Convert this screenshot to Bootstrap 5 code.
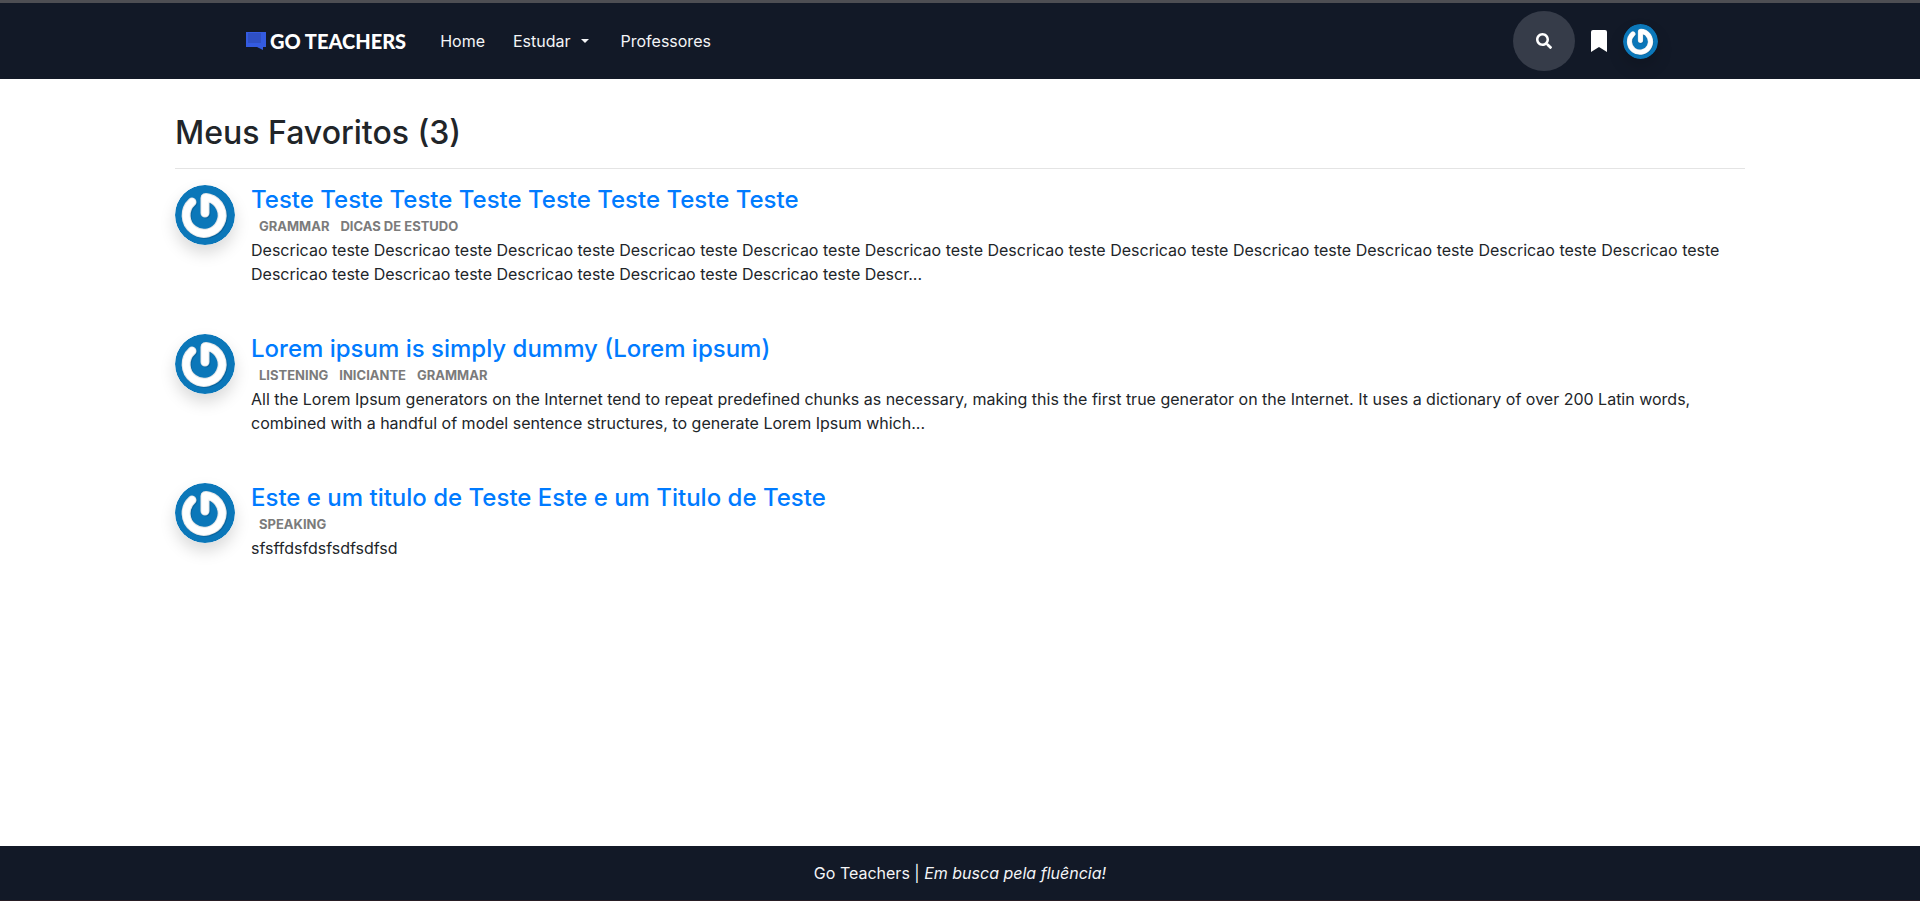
<!DOCTYPE html>
<html lang="pt-BR">
<head>
<meta charset="utf-8">
<meta name="viewport" content="width=device-width, initial-scale=1">
<title>Go Teachers - Meus Favoritos</title>
<link href="https://cdn.jsdelivr.net/npm/bootstrap@5.3.0/dist/css/bootstrap.min.css" rel="stylesheet">
<style>
  :root { --navy: #121927; --link: #007bff; }
  body { font-family: Inter, "Liberation Sans", sans-serif; color: #212529; }
  .site-bar { background: var(--navy); border-top: 3px solid #4d4e53; padding: 8px 0; }
  .bar-inner { padding: 0 102px 0 86px; }
  .site-bar .navbar-brand { font: 900 20px/24px Lato, sans-serif; color: #fff; padding: 0; margin-right: 20px; }
  .site-bar .navbar-nav .nav-link { color: #f4f5f7; padding: 8px 14px; }
  .dropdown-toggle::after { margin-left: 10px; }
  .search-btn { width: 62px; height: 60px; border-radius: 50%; background: #363c49; }
  .avatar { border-radius: 50%; box-shadow: 0 8px 16px rgba(0, 0, 0, .15); flex: none; }
  .page-col { padding: 0 15px; }
  h1 { font-size: 32px; line-height: 38px; padding-top: 35px; }
  .rule { border-top: 1px solid #e4e4e4; opacity: 1; }
  .fav { min-height: 149px; }
  .fav h2 { font-size: 24px; line-height: 29px; }
  .fav h2 a { color: var(--link); }
  .tags { font-size: 13px; line-height: 24px; color: #7b7b7b; padding-left: 8px; gap: 11px; }
  .site-foot { background: var(--navy); color: #f4f5f7; padding: 15px 0; border-bottom: 1px solid #261d24; }
</style>
</head>
<body class="d-flex flex-column min-vh-100 bg-white">
<svg width="0" height="0" class="position-absolute" aria-hidden="true">
  <symbol id="power" viewBox="0 0 60 60">
    <circle cx="30" cy="30" r="30" fill="#0b77b9"/>
    <path d="M17 17A18 18 0 1 0 34 13Q30 12 30 13V28" transform="translate(1 1)" fill="none" stroke="#075a90" stroke-opacity=".6" stroke-width="9" stroke-linecap="round" stroke-linejoin="round"/>
    <path d="M17 17A18 18 0 1 0 34 13Q30 12 30 13V28" fill="none" stroke="#e3e6e8" stroke-width="9" stroke-linecap="round" stroke-linejoin="round"/>
    <path d="M17 17A18 18 0 1 0 34 13Q30 12 30 13V28" fill="none" stroke="#fff" stroke-width="7" stroke-linecap="round" stroke-linejoin="round"/>
  </symbol>
</svg>

<header class="site-bar">
  <div class="row g-0 justify-content-center">
    <nav class="col-10 bar-inner navbar navbar-expand" aria-label="Principal">
      <a class="navbar-brand d-flex align-items-center" href="#">
        <svg width="20" height="18" viewBox="0 0 20 18" class="me-1" aria-hidden="true"><path d="M0 0H20V15H17V18L11 15H0Z" fill="#345be0"/><path d="M2 1H15V11H2Z" fill="#2f50c4"/></svg>
        GO TEACHERS
      </a>
      <ul class="navbar-nav me-auto">
        <li class="nav-item"><a class="nav-link" href="#">Home</a></li>
        <li class="nav-item dropdown me-1"><a class="nav-link dropdown-toggle" href="#" role="button" data-bs-toggle="dropdown" aria-expanded="false">Estudar</a></li>
        <li class="nav-item"><a class="nav-link" href="#">Professores</a></li>
      </ul>
      <button type="button" class="btn search-btn border-0 p-0 d-flex align-items-center justify-content-center" aria-label="Buscar">
        <svg width="16" height="16" viewBox="0 0 512 512" fill="#fff"><path d="M505 442.700 405.300 343c-4.500-4.500-10.600-7-17-7H372c27.600-35.300 44-79.700 44-128C416 93.100 322.900 0 208 0S0 93.100 0 208s93.100 208 208 208c48.300 0 92.700-16.400 128-44v16.300c0 6.400 2.500 12.500 7 17l99.700 99.700c9.400 9.400 24.600 9.400 33.900 0l28.300-28.300c9.400-9.400 9.400-24.600.1-34zM208 336c-70.700 0-128-57.200-128-128 0-70.700 57.200-128 128-128 70.700 0 128 57.200 128 128 0 70.700-57.200 128-128 128z"/></svg>
      </button>
      <a href="#" class="d-flex mx-3" aria-label="Favoritos"><svg width="16" height="22" viewBox="0 0 16 22" fill="#fff"><path d="M0 22V2Q0 0 2 0H14Q16 0 16 2V22L8 17Z"/></svg></a>
      <a href="#" class="d-flex" aria-label="Perfil"><svg class="avatar" width="35" height="35"><use href="#power"/></svg></a>
    </nav>
  </div>
</header>

<main class="row g-0 justify-content-center flex-grow-1 align-content-start">
  <div class="col-10 page-col">
    <h1 class="mb-3">Meus Favoritos (3)</h1>
    <hr class="rule mt-0 mb-3">
    <article class="fav d-flex gap-3">
      <svg class="avatar" width="60" height="60" aria-hidden="true"><use href="#power"/></svg>
      <div>
        <h2 class="mb-0"><a class="text-decoration-none" href="#">Teste Teste Teste Teste Teste Teste Teste Teste</a></h2>
        <div class="tags d-flex fw-bold"><span>GRAMMAR</span><span>DICAS DE ESTUDO</span></div>
        <p class="mb-0">Descricao teste Descricao teste Descricao teste Descricao teste Descricao teste Descricao teste Descricao teste Descricao teste Descricao teste Descricao teste Descricao teste Descricao teste Descricao teste Descricao teste Descricao teste Descricao teste Descricao teste Descr...</p>
      </div>
    </article>
    <article class="fav d-flex gap-3">
      <svg class="avatar" width="60" height="60" aria-hidden="true"><use href="#power"/></svg>
      <div>
        <h2 class="mb-0"><a class="text-decoration-none" href="#">Lorem ipsum is simply dummy (Lorem ipsum)</a></h2>
        <div class="tags d-flex fw-bold"><span>LISTENING</span><span>INICIANTE</span><span>GRAMMAR</span></div>
        <p class="mb-0">All the Lorem Ipsum generators on the Internet tend to repeat predefined chunks as necessary, making this the first true generator on the Internet. It uses a dictionary of over 200 Latin words, combined with a handful of model sentence structures, to generate Lorem Ipsum which...</p>
      </div>
    </article>
    <article class="fav d-flex gap-3">
      <svg class="avatar" width="60" height="60" aria-hidden="true"><use href="#power"/></svg>
      <div>
        <h2 class="mb-0"><a class="text-decoration-none" href="#">Este e um titulo de Teste Este e um Titulo de Teste</a></h2>
        <div class="tags d-flex fw-bold"><span>SPEAKING</span></div>
        <p class="mb-0">sfsffdsfdsfsdfsdfsd</p>
      </div>
    </article>
  </div>
</main>

<footer class="site-foot text-center">Go Teachers | <em>Em busca pela fluência!</em></footer>
<script src="https://cdn.jsdelivr.net/npm/bootstrap@5.3.0/dist/js/bootstrap.bundle.min.js"></script>
</body>
</html>
